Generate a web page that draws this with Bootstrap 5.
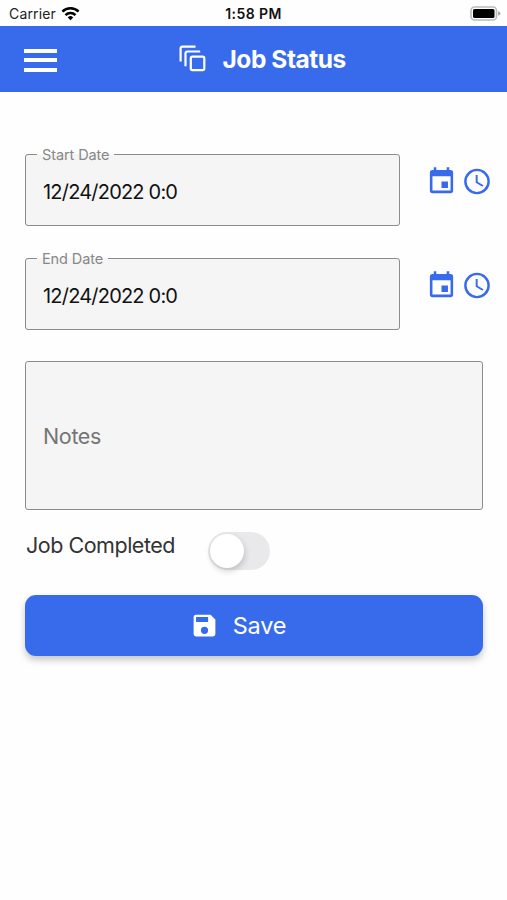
<!DOCTYPE html>
<html lang="en">
<head>
<meta charset="utf-8">
<meta name="viewport" content="width=device-width, initial-scale=1">
<title>Job Status</title>
<link href="https://cdn.jsdelivr.net/npm/bootstrap@5.3.0/dist/css/bootstrap.min.css" rel="stylesheet">
<style>
:root { --brand: #386bec; }
body { font-family: Inter, "Liberation Sans", sans-serif; background: #fefefe; color: #111; height: 900px; overflow: hidden; }
svg { display: block; flex: none; }
.status-bar { height: 25.6px; padding: 2px 6px 0 9px; font-size: 14px; line-height: 22px; }
.status-bar .side { flex: 1 1 0; }
.carrier { letter-spacing: .15px; color: #222; }
.clock-text { font-size: 14px; letter-spacing: .4px; margin-right: 3px; }
.app-bar { height: 66.8px; background: var(--brand); padding: 0 24px; }
.menu-btn { width: 33px; height: 23px; margin-top: 3px; }
.menu-btn span { height: 4px; background: #fff; }
.title-group { padding-left: 122px; gap: 16.5px; }
.title-text { font-size: 24.5px; line-height: 30px; letter-spacing: -.45px; }
.form-area { padding: 53.6px 16px 0 25px; }
.date-row { height: 104px; }
.field { width: 375px; height: 80px; border: 1.5px solid #8c8c8c; border-radius: 3px; background: #f5f5f5; padding: 0 17px; }
.field legend { float: none; width: auto; margin: 0 0 0 -6px; padding: 0 5px; font-size: 14.5px; line-height: 17px; color: #888; letter-spacing: -.1px; }
.field-value { font-size: 20px; line-height: 24px; padding-top: 17px; letter-spacing: -.8px; }
.date-icons { color: var(--brand); padding-top: 19.6px; gap: 4px; margin-right: -2.3px; }
.notes { width: 458px; height: 149px; border: 1.5px solid #8c8c8c; border-radius: 3px; background: #f5f5f5; color: #757575; padding: 2px 17px 0; font-size: 21.5px; margin-top: 7px; letter-spacing: -.35px; }
.toggle-row { height: 38px; margin-top: 22.5px; }
.toggle-label { width: 183px; padding-left: 1px; font-size: 21.5px; line-height: 27px; color: #333; letter-spacing: -.48px; }
.toggle { width: 62px; height: 38px; border-radius: 19px; background: #e9e9eb; padding: 2px; }
.knob { width: 34px; height: 34px; background: #fff; box-shadow: 1px 3px 6px rgba(0,0,0,.18); }
.save-btn { width: 458px; height: 61px; margin-top: 24.5px; padding: 0 44px 0 12px; border-radius: 11px; box-shadow: 0 4px 7px rgba(0,0,0,.22); font-size: 23.5px; gap: 14px; letter-spacing: -.2px; }
.save-btn, .save-btn:hover { background: var(--brand); color: #fff; }
</style>
<script src="https://cdn.jsdelivr.net/npm/bootstrap@5.3.0/dist/js/bootstrap.bundle.min.js"></script>
</head>
<body>
<svg width="0" height="0" class="d-none" aria-hidden="true">
  <symbol id="calendar" viewBox="0 0 24 24"><path fill="currentColor" fill-rule="evenodd" d="M19 19H5V8h14M16 1v2H8V1H6v2H5a2 2 0 0 0-2 2v14a2 2 0 0 0 2 2h14a2 2 0 0 0 2-2V5a2 2 0 0 0-2-2h-1V1M17 12h-5v5h5z"/></symbol>
  <symbol id="clock" viewBox="0 0 24 24"><circle cx="12" cy="12" r="9" fill="none" stroke="currentColor" stroke-width="1.9"/><path fill="currentColor" d="M12.5 7v5.25l4.5 2.67-.75 1.23L11 13V7z"/></symbol>
</svg>

<div class="status-bar d-flex align-items-center">
  <div class="side d-flex align-items-center">
    <span class="carrier">Carrier</span>
    <svg class="ms-1" width="20" height="14" viewBox="-1.5 .5 20 14"><g fill="none" stroke="#000" stroke-width="2.5"><path d="M.9 5.2a11.5 11.5 0 0 1 16.2 0"/><path d="M4 8.6a7.1 7.1 0 0 1 10 0"/></g><path d="M9 13.7l-2.7-2.8a3.9 3.9 0 0 1 5.4 0z"/></svg>
  </div>
  <span class="clock-text fw-semibold">1:58 PM</span>
  <div class="side d-flex justify-content-end">
    <svg width="31" height="15" viewBox="0 0 31 15"><rect x="1" y="1" width="25.5" height="13" rx="3.5" fill="#fff" stroke="#bbb" stroke-width="1.6"/><rect x="3" y="3" width="21.5" height="9" rx="1.5"/><path d="M28 5.2q2.5.7 2.5 2.3T28 9.8z" fill="#aaa"/></svg>
  </div>
</div>

<header class="app-bar d-flex align-items-center text-white">
  <div class="menu-btn d-flex flex-column justify-content-between" role="button" aria-label="Menu"><span></span><span></span><span></span></div>
  <div class="title-group d-flex align-items-center">
    <svg width="27" height="27" viewBox="0 0 27 27" fill="none" stroke="#fff" stroke-width="2.2"><path d="M1.6 16.5V3.6q0-2 2-2h12.9M6.5 21.2V8.5q0-2 2-2h12.7"/><rect x="11.8" y="11.7" width="13.5" height="13.5" rx="1.7"/></svg>
    <span class="title-text fw-bold">Job Status</span>
  </div>
</header>

<main class="form-area">
  <div class="date-row d-flex justify-content-between align-items-start">
    <fieldset class="field">
      <legend>Start Date</legend>
      <div class="field-value">12/24/2022 0:0</div>
    </fieldset>
    <div class="date-icons d-flex"><svg width="31" height="31"><use href="#calendar"/></svg><svg width="32" height="31"><use href="#clock"/></svg></div>
  </div>
  <div class="date-row d-flex justify-content-between align-items-start">
    <fieldset class="field">
      <legend>End Date</legend>
      <div class="field-value">12/24/2022 0:0</div>
    </fieldset>
    <div class="date-icons d-flex"><svg width="31" height="31"><use href="#calendar"/></svg><svg width="32" height="31"><use href="#clock"/></svg></div>
  </div>
  <div class="notes d-flex align-items-center">Notes</div>
  <div class="toggle-row d-flex align-items-start">
    <span class="toggle-label">Job Completed</span>
    <div class="toggle" role="switch" aria-checked="false"><div class="knob rounded-circle"></div></div>
  </div>
  <button type="button" class="save-btn btn border-0 d-flex align-items-center justify-content-center">
    <svg width="29" height="29" viewBox="0 0 24 24"><path fill="currentColor" fill-rule="evenodd" d="M15 9H5V5h10zM12 19a3 3 0 1 1 0-6 3 3 0 0 1 0 6zM17 3H5a2 2 0 0 0-2 2v14a2 2 0 0 0 2 2h14a2 2 0 0 0 2-2V7z"/></svg>
    <span>Save</span>
  </button>
</main>
</body>
</html>
